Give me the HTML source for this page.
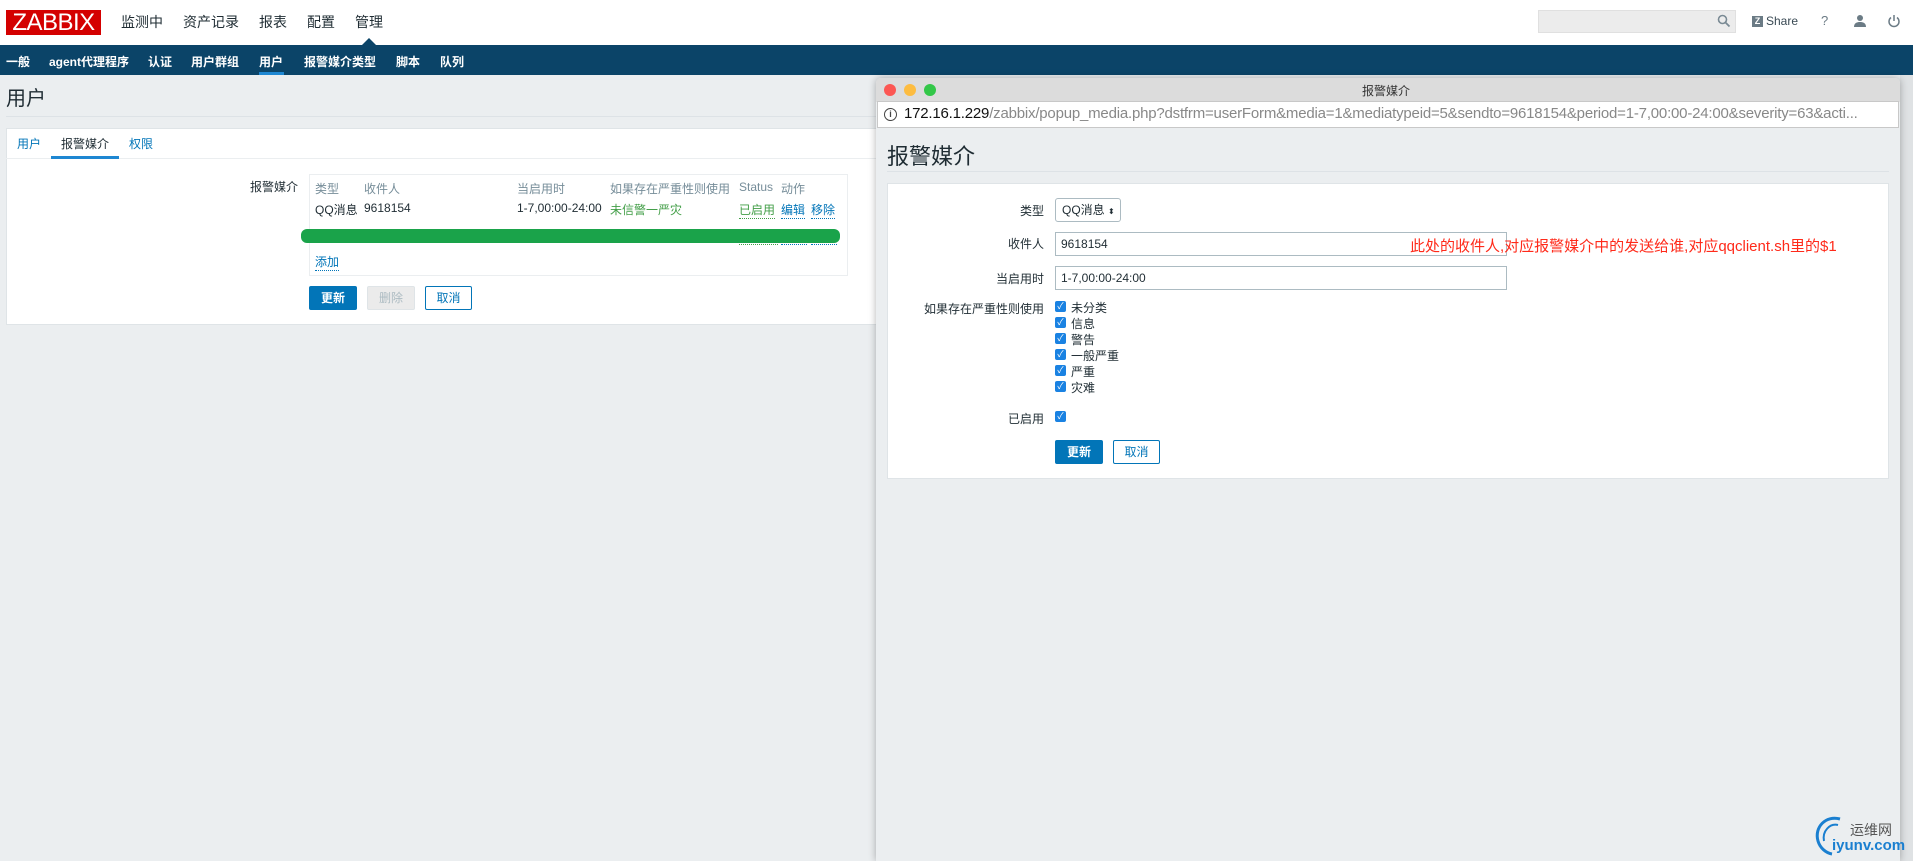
<!DOCTYPE html>
<html><head><meta charset="utf-8"><style>
*{margin:0;padding:0;box-sizing:border-box}
body{width:1913px;height:861px;overflow:hidden;background:#ebeef0;font-family:"Liberation Sans","Noto Sans CJK SC",sans-serif;font-size:12px;color:#1f2c33;position:relative}
.a{position:absolute;white-space:nowrap}
.top{left:0;top:0;width:1913px;height:45px;background:#fff}
.nav{left:0;top:45px;width:1913px;height:30px;background:#0b4468}
.nav span{position:absolute;top:8px;color:#fff;font-weight:bold;font-size:12px}
.menu{top:12px;font-size:14px;color:#1f2c33}
.lnk{color:#0275b8;border-bottom:1px dotted #0275b8}
.btn{position:absolute;height:24px;border-radius:2px;font-size:12px;text-align:center;line-height:22px}
.cb{position:absolute;left:1055px;width:11px;height:11px;background:#1a82e2;border-radius:2px;color:#fff;font-size:9px;line-height:11px;text-align:center}
.cl{position:absolute;left:1071px;font-size:12px}
.lbl{position:absolute;right:869px;font-size:12px;text-align:right}
</style></head><body>
<div class="a top"></div>
<div class="a" style="left:6px;top:10px;width:95px;height:25px;background:#d40000;color:#fff;font-size:24px;line-height:25px;text-align:center;letter-spacing:-0.5px">ZABBIX</div>
<div class="a menu" style="left:121px">监测中</div>
<div class="a menu" style="left:183px">资产记录</div>
<div class="a menu" style="left:259px">报表</div>
<div class="a menu" style="left:307px">配置</div>
<div class="a menu" style="left:355px">管理</div>
<div class="a" style="left:362px;top:38px;width:0;height:0;border-left:7px solid transparent;border-right:7px solid transparent;border-bottom:7px solid #0b4468"></div>
<div class="a" style="left:1538px;top:10px;width:198px;height:23px;background:#ececec;border:1px solid #e0e0e0"></div>
<svg class="a" style="left:1717px;top:14px" width="14" height="14" viewBox="0 0 14 14"><circle cx="5.5" cy="5.5" r="4" fill="none" stroke="#7a8a94" stroke-width="1.6"/><path d="M8.5 8.5L12.5 12.5" stroke="#7a8a94" stroke-width="1.8"/></svg>
<div class="a" style="left:1752px;top:16px;width:11px;height:11px;background:#6b7b85;color:#fff;font-size:9px;font-weight:bold;line-height:11px;text-align:center">Z</div>
<div class="a" style="left:1766px;top:14px;font-size:12px;color:#3a4a54">Share</div>
<div class="a" style="left:1821px;top:13px;font-size:13px;color:#6b7b85">?</div>
<svg class="a" style="left:1853px;top:14px" width="14" height="14" viewBox="0 0 14 14"><circle cx="7" cy="4" r="3" fill="#6b7b85"/><path d="M1 13c0-4 3-5 6-5s6 1 6 5z" fill="#6b7b85"/></svg>
<svg class="a" style="left:1887px;top:14px" width="14" height="14" viewBox="0 0 14 14"><path d="M4 3.5A5 5 0 1 0 10 3.5" fill="none" stroke="#6b7b85" stroke-width="1.5"/><path d="M7 1v6" stroke="#6b7b85" stroke-width="1.5"/></svg>
<div class="a nav">
<span style="left:6px">一般</span><span style="left:49px">agent代理程序</span><span style="left:148px">认证</span><span style="left:191px">用户群组</span><span style="left:259px">用户</span><span style="left:304px">报警媒介类型</span><span style="left:396px">脚本</span><span style="left:440px">队列</span>
<div style="position:absolute;left:259px;top:27px;width:25px;height:3px;background:#1e87d2"></div>
</div>
<div class="a" style="left:6px;top:82px;font-size:20px;color:#1f2c33">用户</div>
<div class="a" style="left:6px;top:116px;width:1900px;height:1px;background:#dde2e6"></div>
<div class="a" style="left:6px;top:128px;width:1900px;height:197px;background:#fff;border:1px solid #dfe4e7"></div>
<div class="a" style="left:6px;top:158px;width:1900px;height:1px;background:#ebeef0"></div>
<div class="a" style="left:17px;top:135px;color:#0275b8">用户</div>
<div class="a" style="left:61px;top:135px;color:#1f2c33">报警媒介</div>
<div class="a" style="left:129px;top:135px;color:#0275b8">权限</div>
<div class="a" style="left:51px;top:156px;width:68px;height:3px;background:#1e87d2"></div>
<div class="a" style="left:250px;top:178px">报警媒介</div>
<div class="a" style="left:309px;top:174px;width:539px;height:102px;border:1px solid #ebeef0"></div>
<div class="a" style="left:315px;top:180px;color:#768d99">类型</div>
<div class="a" style="left:364px;top:180px;color:#768d99">收件人</div>
<div class="a" style="left:517px;top:180px;color:#768d99">当启用时</div>
<div class="a" style="left:610px;top:180px;color:#768d99">如果存在严重性则使用</div>
<div class="a" style="left:739px;top:180px;color:#768d99">Status</div>
<div class="a" style="left:781px;top:180px;color:#768d99">动作</div>
<div class="a" style="left:315px;top:201px">QQ消息</div>
<div class="a" style="left:364px;top:201px">9618154</div>
<div class="a" style="left:517px;top:201px">1-7,00:00-24:00</div>
<div class="a" style="left:610px;top:201px;color:#429e47">未信警一严灾</div>
<div class="a" style="left:739px;top:201px;color:#429e47;border-bottom:1px dotted #429e47">已启用</div>
<div class="a lnk" style="left:781px;top:201px">编辑</div>
<div class="a lnk" style="left:811px;top:201px">移除</div>
<div class="a" style="left:739px;top:244px;width:39px;border-bottom:1px dotted #429e47"></div>
<div class="a" style="left:781px;top:244px;width:26px;border-bottom:1px dotted #0275b8"></div>
<div class="a" style="left:811px;top:244px;width:26px;border-bottom:1px dotted #0275b8"></div>
<div class="a" style="left:301px;top:229px;width:539px;height:14px;background:#1aa34a;border-radius:6px"></div>
<div class="a lnk" style="left:315px;top:253px">添加</div>
<div class="btn" style="left:309px;top:286px;width:48px;background:#0275b8;color:#fff;border:1px solid #0275b8;font-weight:bold">更新</div>
<div class="btn" style="left:367px;top:286px;width:48px;background:#ebebeb;color:#acbbc2;border:1px solid #dfe4e7">删除</div>
<div class="btn" style="left:425px;top:286px;width:47px;background:#fff;color:#0275b8;border:1px solid #0275b8">取消</div>

<!-- popup -->
<div class="a" style="left:1900px;top:75px;width:13px;height:786px;background:#dfe2e4"></div>
<div class="a" style="left:876px;top:78px;width:1024px;height:783px;background:#ebeef0;box-shadow:0 0 8px rgba(0,0,0,0.3);border-radius:5px 5px 0 0"></div>
<div class="a" style="left:876px;top:78px;width:1024px;height:24px;background:#dcdcdc;border-radius:5px 5px 0 0"></div>
<div class="a" style="left:884px;top:84px;width:12px;height:12px;border-radius:50%;background:#fc5753"></div>
<div class="a" style="left:904px;top:84px;width:12px;height:12px;border-radius:50%;background:#fdbc40"></div>
<div class="a" style="left:924px;top:84px;width:12px;height:12px;border-radius:50%;background:#33c748"></div>
<div class="a" style="left:1362px;top:82px;font-size:12px;color:#333">报警媒介</div>
<div class="a" style="left:877px;top:101px;width:1022px;height:27px;background:#fff;border:1px solid #c8c8c8"></div>
<div class="a" style="left:884px;top:108px;width:13px;height:13px;border:1.5px solid #444;border-radius:50%;font-size:9px;line-height:10px;text-align:center;color:#444;font-weight:bold">i</div>
<div class="a" style="left:904px;top:105px;font-size:15px;color:#111;width:985px;overflow:hidden;letter-spacing:-0.2px">172.16.1.229<span style="color:#888">/zabbix/popup_media.php?dstfrm=userForm&amp;media=1&amp;mediatypeid=5&amp;sendto=9618154&amp;period=1-7,00:00-24:00&amp;severity=63&amp;acti...</span></div>
<div class="a" style="left:887px;top:139px;font-size:22px;color:#1f2c33">报警媒介</div>
<div class="a" style="left:887px;top:171px;width:1002px;height:1px;background:#dde2e6"></div>
<div class="a" style="left:887px;top:183px;width:1002px;height:296px;background:#fff;border:1px solid #dfe4e7"></div>
<div class="lbl" style="top:202px">类型</div>
<div class="a" style="left:1055px;top:198px;width:66px;height:24px;border:1px solid #acbbc2;border-radius:3px;background:#fff;padding-left:6px;line-height:22px;font-size:12px">QQ消息 <span style="font-size:8px">⬍</span></div>
<div class="lbl" style="top:235px">收件人</div>
<div class="a" style="left:1055px;top:232px;width:452px;height:24px;border:1px solid #acbbc2;padding-left:5px;line-height:22px">9618154</div>
<div class="a" style="left:1410px;top:235px;font-size:15px;color:#ff2a1a">此处的收件人,对应报警媒介中的发送给谁,对应qqclient.sh里的$1</div>
<div class="lbl" style="top:270px">当启用时</div>
<div class="a" style="left:1055px;top:266px;width:452px;height:24px;border:1px solid #acbbc2;padding-left:5px;line-height:22px">1-7,00:00-24:00</div>
<div class="lbl" style="top:300px">如果存在严重性则使用</div>
<div class="cb" style="top:301px">✓</div><div class="cl" style="top:299px">未分类</div>
<div class="cb" style="top:317px">✓</div><div class="cl" style="top:315px">信息</div>
<div class="cb" style="top:333px">✓</div><div class="cl" style="top:331px">警告</div>
<div class="cb" style="top:349px">✓</div><div class="cl" style="top:347px">一般严重</div>
<div class="cb" style="top:365px">✓</div><div class="cl" style="top:363px">严重</div>
<div class="cb" style="top:381px">✓</div><div class="cl" style="top:379px">灾难</div>
<div class="lbl" style="top:410px">已启用</div>
<div class="cb" style="top:411px">✓</div>
<div class="btn" style="left:1055px;top:440px;width:48px;background:#0275b8;color:#fff;border:1px solid #0275b8;font-weight:bold">更新</div>
<div class="btn" style="left:1113px;top:440px;width:47px;background:#fff;color:#0275b8;border:1px solid #0275b8">取消</div>
<svg class="a" style="left:1810px;top:813px" width="40" height="44" viewBox="0 0 40 44"><path d="M30 6C16 2 4 14 8 28C10 35 16 40 22 41" fill="none" stroke="#1a7fd0" stroke-width="3"/><path d="M28 12C20 10 12 18 14 28" fill="none" stroke="#1a7fd0" stroke-width="2"/></svg>
<div class="a" style="left:1850px;top:820px;font-size:14px;color:#555">运维网</div>
<div class="a" style="left:1832px;top:837px;font-size:15px;color:#1a7fd0;font-weight:bold">iyunv.com</div>
</body></html>
